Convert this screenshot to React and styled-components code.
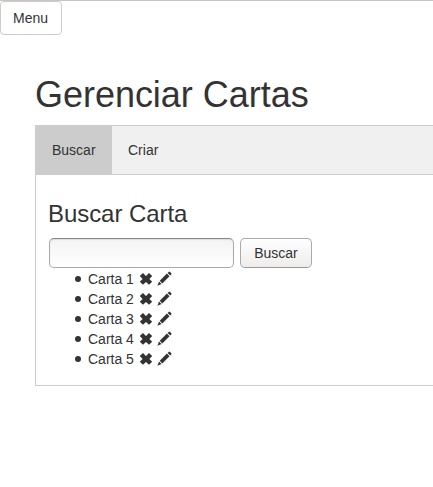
import React from "react";
import styled, { createGlobalStyle } from "styled-components";

const GlobalStyle = createGlobalStyle`
  *, *::before, *::after { box-sizing: border-box; }
  body {
    margin: 0;
    background: #fff;
    color: #333;
    font: 14px/20px "Liberation Sans", Arial, sans-serif;
  }
`;

const Page = styled.div`
  border-top: 1px solid #c8c4c1;
  min-height: 487px;
`;

const MenuButton = styled.button`
  display: block;
  width: 62px;
  height: 34px;
  padding: 6px 12px;
  border: 1px solid #ccc;
  border-radius: 4px;
  background: #fff;
  color: #333;
  font: inherit;
  text-align: left;
`;

const Content = styled.main`
  margin: 40px 0 0 35px;
`;

const Title = styled.h1`
  margin: 0 0 10px;
  font-size: 36px;
  font-weight: 500;
  line-height: 40px;
  letter-spacing: -0.03px;
  white-space: nowrap;
`;

const TabBar = styled.nav`
  display: flex;
  height: 50px;
  border: 1px solid #ccc;
  border-right: 0;
  background: #f0f0f0;
`;

const Tab = styled.button`
  min-width: ${({ $active }) => ($active ? "76px" : "0")};
  padding: 14px 16px;
  border: 0;
  background: ${({ $active }) => ($active ? "#ccc" : "transparent")};
  color: #333;
  font: inherit;
  text-align: left;
`;

const Panel = styled.section`
  height: 211px;
  padding: 26px 12px 0;
  border: solid #ccc;
  border-width: 0 0 1px 1px;
`;

const Subtitle = styled.h3`
  margin: 0 0 11px;
  font-size: 24px;
  font-weight: 500;
  line-height: 26px;
  letter-spacing: -0.06px;
`;

const SearchForm = styled.div`
  display: flex;
  gap: 6px;
  padding-left: 1px;
`;

const SearchInput = styled.input`
  width: 185px;
  height: 30px;
  padding: 4px 6px;
  border: 1px solid #aaa;
  border-top-color: #888;
  border-radius: 5px;
  background: linear-gradient(#f3f3f3, #fff);
  box-shadow: inset 0 1px 1px #ddd;
  outline: 0;
  font: inherit;
`;

const SearchButton = styled.button`
  width: 72px;
  height: 30px;
  padding: 0;
  border: 1px solid #aaa;
  border-bottom-color: #999;
  border-radius: 5px;
  background: linear-gradient(#fff, #eeedec);
  color: #333;
  font: inherit;
`;

const CardList = styled.ul`
  margin: 1px 0 0;
  padding: 0 0 0 27px;
  list-style: none;
`;

const CardItem = styled.li`
  display: flex;
  align-items: center;
  height: 20px;

  &::before {
    content: "";
    width: 6px;
    height: 6px;
    margin-right: 7px;
    border-radius: 50%;
    background: #333;
  }
`;

const CardName = styled.span`
  width: 51px;
  white-space: nowrap;
`;

const Icon = styled.svg`
  width: 15px;
  height: 15px;
  margin-right: 3px;
  margin-top: -1px;
  fill: #333;
`;

const RemoveIcon = () => (
  <Icon viewBox="0 0 15 15">
    <path d="M4 2 7 4.9 10 2l3.2 3.1-2.8 2.8 2.8 2.8-3.2 3.1-3-2.9-3 2.9-3.2-3.1 2.8-2.8L.8 5.1z" />
  </Icon>
);

const PencilIcon = () => (
  <Icon viewBox="0 0 15 15">
    <path d="M11.6.9q.7-.7 1.4 0l1.2 1.2q.7.7 0 1.4l-1 1-2.6-2.6zM9.9 2.6l2.6 2.6-7.2 7.2-2.6-2.6zM2 10.5 4.6 13.1.4 14.7z" />
  </Icon>
);

const cards = ["Carta 1", "Carta 2", "Carta 3", "Carta 4", "Carta 5"];

export default function App() {
  return (
    <Page>
      <GlobalStyle />
      <MenuButton>Menu</MenuButton>
      <Content>
        <Title>Gerenciar Cartas</Title>
        <TabBar>
          <Tab $active>Buscar</Tab>
          <Tab>Criar</Tab>
        </TabBar>
        <Panel>
          <Subtitle>Buscar Carta</Subtitle>
          <SearchForm>
            <SearchInput aria-label="Buscar Carta" />
            <SearchButton>Buscar</SearchButton>
          </SearchForm>
          <CardList>
            {cards.map((card) => (
              <CardItem key={card}>
                <CardName>{card}</CardName>
                <RemoveIcon />
                <PencilIcon />
              </CardItem>
            ))}
          </CardList>
        </Panel>
      </Content>
    </Page>
  );
}
